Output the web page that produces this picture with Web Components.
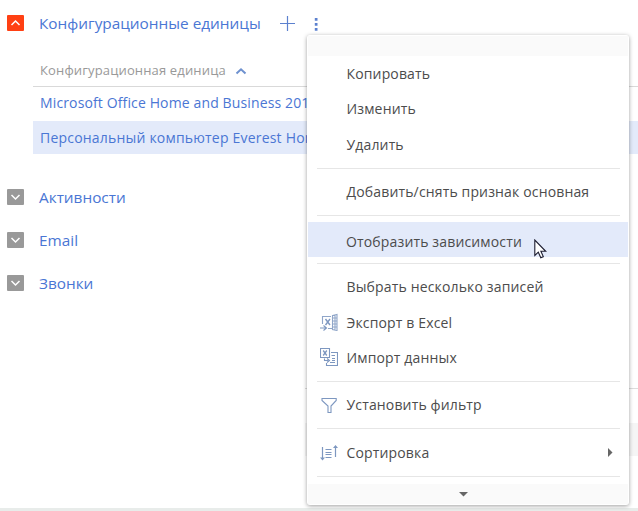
<!DOCTYPE html>
<html lang="ru"><head><meta charset="utf-8"><title>Конфигурационные единицы</title>
<style>
html,body{margin:0;width:638px;height:511px;overflow:hidden;background:#fff;font-family:"Open Sans","Noto Sans",sans-serif}
</style></head><body>
<app-page></app-page>
<script>
const define=(name,html,setup)=>customElements.define(name,class extends HTMLElement{
  constructor(){
    super();
    const t=document.createElement('template');
    t.innerHTML=html;
    this.attachShadow({mode:'open'}).append(t.content.cloneNode(true));
  }
  connectedCallback(){ if(setup) setup(this,this.shadowRoot); }
});

const icons={
  exportx:'<path d="M2.500 11V3.500H11M8 15.500h4M12.500 2.500l4.500-1v16l-4.500-1zM12.500 5h5M12.500 8h5M12.500 11h5M12.500 14h5M15 2v15" opacity=".85"/><path d="M5.500 6l4.500 6M10 6l-4.500 6" stroke-width="1.400"/><path d="M0 15h6M3.500 12.500l3 2.500-3 2.500"/>',
  importx:'<path d="M.5.5h9v9h-9z"/><path d="M3.200 2.500l3.600 5M6.800 2.500l-3.600 5" stroke-width="1.300"/><path d="M11 4.500h6.500v13h-11V15M11.500 7.500H15M12 10.500h3M12 12.500h3M10 14.500h5"/><path d="M4.500 10.500v2h4M7 10.500l2.500 2-2.500 2"/>',
  filter:'<path d="M2 2.500h14.200v2L11 10v6.500H8V10L2 4.500z"/>',
  sort:'<path d="M2.500 4v12M15.500 14V4M5.500 6.500h6M5.500 9.500h6M5.500 11.500h6M5.500 14.500h6" stroke-width="1.200"/><path d="M0 14.500h5L2.500 17.500zM13 5h5L15.500 2z" fill="#7d97c0" stroke="none"/>'
};

define('section-toggle',`<style>
:host{display:block;width:17px;height:16px;border-radius:1px;background:#999;flex:none}
:host([open]){background:#ff4013;margin-top:-1px}svg{display:block}:host([open]) svg{transform:scaleY(-1)}
</style><svg width="17" height="16" viewBox="0 0 17 16"><path d="M4.500 6l4 4 4-4" fill="none" stroke="#fff" stroke-width="1.500"/></svg>`);

define('section-title',`<style>
:host{display:flex;align-items:center;height:43px;padding-left:7px;color:#4a76d4;font-size:15.350px}
span{margin-left:15px;white-space:nowrap}
</style><section-toggle></section-toggle><span><slot></slot></span>`,(h,r)=>{
  if(h.hasAttribute('open')) r.querySelector('section-toggle').setAttribute('open','');
});

define('title-tools',`<style>:host{display:block;margin-left:18px}svg{display:block}</style>
<svg width="44" height="18" viewBox="0 0 44 18"><path d="M1 9.500h15M8.500 2v15" stroke="#5c81cf" stroke-width="1.200"/><path d="M35.800 4h2.700v2.700h-2.700zM35.800 9h2.700v2.700h-2.700zM35.800 14h2.700v2.700h-2.700z" fill="#5c81cf"/></svg>`);

define('table-head',`<style>
:host{display:flex;align-items:center;box-sizing:border-box;height:33px;padding-left:7px;border-bottom:1px solid #d9d9d9;color:#999;font-size:13px;letter-spacing:.15px;white-space:nowrap}
svg{margin-left:9px;margin-top:2px}
</style><slot></slot><svg width="12" height="8" viewBox="0 0 12 8"><path d="M1.500 6.500L6 2.300l4.500 4.200" fill="none" stroke="#6e91cf" stroke-width="2"/></svg>`);

define('table-row',`<style>
:host{display:flex;align-items:center;box-sizing:border-box;height:34px;padding:0 0 3px 7px;color:#4a76d4;font-size:14px;letter-spacing:.13px;white-space:nowrap;overflow:hidden}
:host([selected]){background:#e3eafa;height:33px;padding-bottom:1px;letter-spacing:.2px}
</style><slot></slot>`);

define('menu-item',`<style>
:host{display:flex;align-items:center;height:35.250px;padding-left:12px;color:#4c4c4c;font-size:14px;letter-spacing:.15px;white-space:nowrap}
:host([active]){background:#e3eafa}
:host([active]) span{padding-top:4px;margin-left:-.5px}
:host([icon=exportx]) span{padding-top:1px}
:host([icon=exportx]) i{margin-top:1px}
i{width:18px;height:18px;margin-right:8.500px;flex:none}i svg{display:block;fill:none;stroke:#7d97c0;stroke-width:1.100}
.more{display:none;margin-left:auto;margin-right:15px;padding-top:1px}:host([submenu]) .more{display:block}
</style><i></i><span><slot></slot></span><svg class="more" width="5" height="9"><path d="M0 0l4.500 4.500-4.500 4.500z" fill="#666"/></svg>`,(h,r)=>{
  const k=h.getAttribute('icon');
  if(k) r.querySelector('i').innerHTML='<svg width="18" height="18" viewBox="0 0 18 18">'+icons[k]+'</svg>';
});

define('menu-divider',`<style>:host{display:flow-root;height:12.250px;padding:0 8px 0 9px;box-sizing:border-box}div{height:1px;margin-top:5.900px;background:#e6e6e6}</style><div></div>`);

define('menu-scroller',`<style>:host{display:flex;align-items:center;justify-content:center;height:20px;background:#fafafa}svg{display:none}:host([down]) svg{display:block;margin-right:9px}</style><svg width="9" height="5"><path d="M0 0h9L4.500 4.500z" fill="#666"/></svg>`);

define('context-menu',`<style>
:host{display:flex;flex-direction:column;box-sizing:border-box;width:322px;height:470px;padding:1px;background:#fff;border-radius:3px;box-shadow:0 1px 4px rgba(0,0,0,.38)}
.list{flex:1;overflow:hidden}
</style><menu-scroller></menu-scroller><div class="list"><slot></slot></div><menu-scroller down></menu-scroller>`);

define('mouse-pointer',`<style>:host{display:block}svg{display:block}</style><svg width="13" height="20" viewBox="0 0 13 20"><path d="M.8 1v15.500l3.500-3.300 2.500 5.500 2.500-1.100-2.400-5.300h4.800z" fill="#fff" stroke="#1c1c30" stroke-width="1.100"/></svg>`);

define('app-page',`<style>
:host{display:flex;flex-direction:column;position:relative;width:638px;height:511px;overflow:hidden}
.top{display:flex;align-items:center;height:46px}
.table{margin:8px 0 0 33px}
.sections{padding-top:21px}
.rest{margin:auto 0 52px 305px;border-top:1px solid #ddd;padding-top:34px}
.rest div{height:33px;background:#f5f5f5}
footer{height:3px;background:#e8ecea}
context-menu{position:absolute;left:307px;top:35px}
mouse-pointer{position:absolute;left:534px;top:239px}
</style>
<div class="top"><section-title open>Конфигурационные единицы</section-title><title-tools></title-tools></div>
<div class="table"><table-head>Конфигурационная единица</table-head><table-row>Microsoft Office Home and Business 2010</table-row><table-row selected>Персональный компьютер Everest Home</table-row></div>
<div class="sections"><section-title>Активности</section-title><section-title>Email</section-title><section-title>Звонки</section-title></div>
<div class="rest"><div></div></div><footer></footer>
<context-menu>
<menu-item>Копировать</menu-item><menu-item>Изменить</menu-item><menu-item>Удалить</menu-item><menu-divider></menu-divider>
<menu-item>Добавить/снять признак основная</menu-item><menu-divider></menu-divider>
<menu-item active>Отобразить зависимости</menu-item><menu-divider></menu-divider>
<menu-item>Выбрать несколько записей</menu-item><menu-item icon="exportx">Экспорт в Excel</menu-item><menu-item icon="importx">Импорт данных</menu-item><menu-divider></menu-divider>
<menu-item icon="filter">Установить фильтр</menu-item><menu-divider></menu-divider>
<menu-item icon="sort" submenu>Сортировка</menu-item><menu-divider></menu-divider>
</context-menu><mouse-pointer></mouse-pointer>`);
</script></body></html>
